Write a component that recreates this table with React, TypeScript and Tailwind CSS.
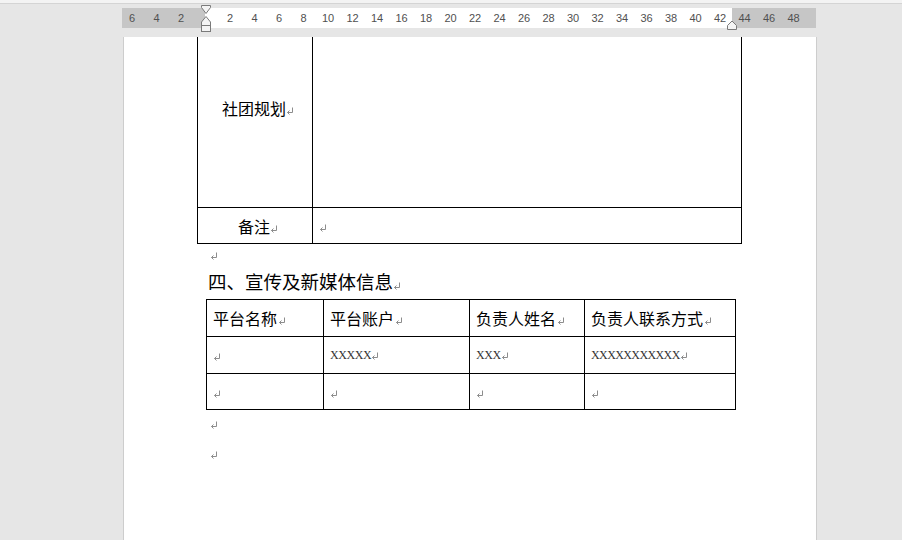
import React from "react";

const CJK = { fontFamily: '"Noto Sans CJK SC", "Noto Sans", sans-serif' };

function Mark({ className = "" }: { className?: string }) {
  return (
    <svg
      width="8"
      height="8"
      viewBox="0 0 8 8"
      className={"inline-block shrink-0 " + className}
      fill="none"
      stroke="#8c8c8c"
      strokeWidth="1"
    >
      <path d="M6.5 0.5 V5.5 H1.5" />
      <path d="M3.5 3.5 L1.5 5.5 L3.5 7.5" />
    </svg>
  );
}

const nums = [-6, -4, -2, 2, 4, 6, 8, 10, 12, 14, 16, 18, 20, 22, 24, 26, 28, 30, 32, 34, 36, 38, 40, 42, 44, 46, 48];

function Ruler() {
  return (
    <div className="relative ml-[122px] mt-[4px] flex h-[20px] w-[694px]">
      <div className="h-full w-[83px] bg-[#c6c6c6]" />
      <div className="h-full w-[527px] bg-white" />
      <div className="h-full w-[84px] bg-[#c6c6c6]" />
      {nums.map((n) => (
        <span
          key={n}
          className="absolute top-[3px] -translate-x-1/2 text-[11px] leading-[14px] text-[#505050]"
          style={{ left: 83.5 + n * 12.25, fontFamily: '"Liberation Sans", Arial, sans-serif' }}
        >
          {Math.abs(n)}
        </span>
      ))}
      <svg className="absolute left-[78px] top-[-4px]" width="12" height="33" viewBox="0 0 12 33" fill="#f4f4f4" stroke="#7a7a7a" strokeWidth="1">
        <path d="M1.5 1.5 H10.5 V3.5 L6 9.5 L1.5 3.5 Z" />
        <path d="M6 12.5 L10.5 18 V21.5 H1.5 V18 Z" />
        <rect x="1.5" y="21.5" width="9" height="6" />
      </svg>
      <svg className="absolute left-[604px] top-[12px]" width="12" height="11" viewBox="0 0 12 11" fill="#f4f4f4" stroke="#7a7a7a" strokeWidth="1">
        <path d="M6 1 L10.5 5.5 V9.5 H1.5 V5.5 Z" />
      </svg>
    </div>
  );
}

function Table1() {
  return (
    <div className="ml-[73px] mt-[-29px] w-[545px] border border-black text-[16px] text-black" style={CJK}>
      <div className="flex h-[199px] border-b border-black">
        <div className="flex w-[115px] items-center justify-center border-r border-black pl-[6px]">
          <span>社团规划</span>
          <Mark className="mt-[6px]" />
        </div>
        <div className="w-[428px]" />
      </div>
      <div className="flex h-[35px]">
        <div className="flex w-[115px] items-center justify-center border-r border-black pl-[6px]">
          <span>备注</span>
          <Mark className="mt-[6px]" />
        </div>
        <div className="flex w-[428px] items-center pl-[6px] pt-[4px]">
          <Mark />
        </div>
      </div>
    </div>
  );
}

const serif = { fontFamily: '"Liberation Serif", "Times New Roman", serif' };

function Cell({ w, children, last }: { w: string; children?: React.ReactNode; last?: boolean }) {
  return (
    <div className={"flex items-center pl-[6px] " + w + (last ? "" : " border-r border-black")}>
      {children}
    </div>
  );
}

function Table2() {
  return (
    <div className="ml-[82px] w-[530px] border border-black text-[16px] text-black" style={CJK}>
      <div className="flex h-[37px] border-b border-black">
        <Cell w="w-[117px]"><span>平台名称</span><Mark className="mt-[6px] ml-[1px]" /></Cell>
        <Cell w="w-[146px]"><span>平台账户</span><Mark className="mt-[6px] ml-[1px]" /></Cell>
        <Cell w="w-[115px]"><span>负责人姓名</span><Mark className="mt-[6px] ml-[1px]" /></Cell>
        <Cell w="w-[150px]" last><span>负责人联系方式</span><Mark className="mt-[6px] ml-[1px]" /></Cell>
      </div>
      <div className="flex h-[37px] border-b border-black text-[12px] text-[#333]" style={serif}>
        <Cell w="w-[117px]"><Mark className="mt-[4px]" /></Cell>
        <Cell w="w-[146px]"><span className="tracking-[-0.4px]">XXXXX</span><Mark className="mt-[2px]" /></Cell>
        <Cell w="w-[115px]"><span className="tracking-[-0.4px]">XXX</span><Mark className="mt-[2px]" /></Cell>
        <Cell w="w-[150px]" last><span className="tracking-[-0.6px]">XXXXXXXXXXX</span><Mark className="mt-[2px]" /></Cell>
      </div>
      <div className="flex h-[35px]">
        <Cell w="w-[117px]"><Mark className="mt-[4px]" /></Cell>
        <Cell w="w-[146px]"><Mark className="mt-[4px]" /></Cell>
        <Cell w="w-[115px]"><Mark className="mt-[4px]" /></Cell>
        <Cell w="w-[150px]" last><Mark className="mt-[4px]" /></Cell>
      </div>
    </div>
  );
}

export default function App() {
  return (
    <div className="relative h-[540px] w-[902px] overflow-hidden bg-[#e6e6e6]">
      <div className="h-[4px] border-b border-[#d4d4d4] bg-[#f3f3f3]" />
      <Ruler />
      <div className="ml-[123px] mt-[9px] h-[503px] w-[694px] overflow-hidden border-x border-[#cdcdcd] bg-white">
        <Table1 />
        <div className="flex h-[21px] items-center pl-[86px] pt-[2px]">
          <Mark />
        </div>
        <div className="flex h-[34px] items-center pl-[84px] text-[18.5px] text-black" style={CJK}>
          <span>四、宣传及新媒体信息</span>
          <Mark className="mt-[8px]" />
        </div>
        <Table2 />
        <div className="flex h-[30px] items-center pl-[86px]">
          <Mark />
        </div>
        <div className="flex h-[30px] items-center pl-[86px]">
          <Mark />
        </div>
      </div>
    </div>
  );
}
